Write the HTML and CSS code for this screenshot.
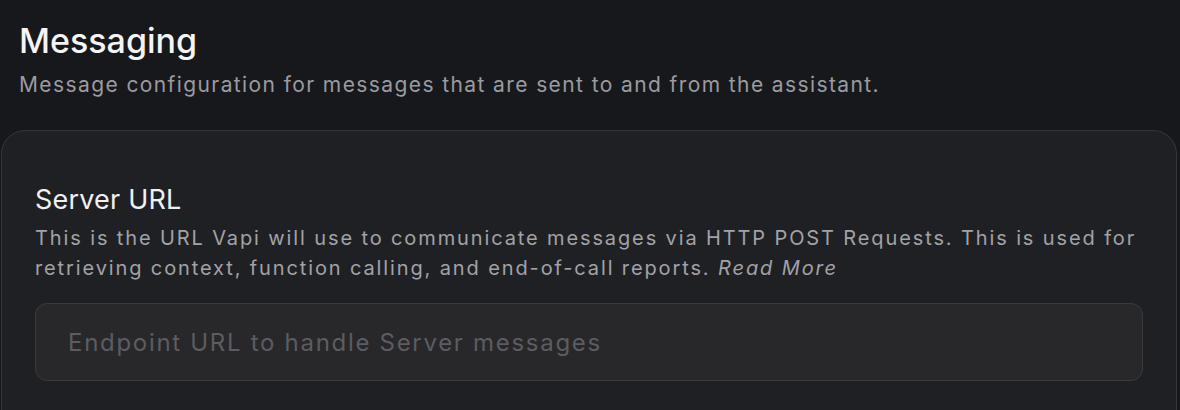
FILE: index.html
```html
<!DOCTYPE html>
<html>
<head>
<meta charset="utf-8">
<link rel="stylesheet" href="styles.css">
</head>
<body>
<div class="page">
  <header class="header">
    <h1 class="title">Messaging</h1>
    <p class="subtitle">Message configuration for messages that are sent to and from the assistant.</p>
  </header>
  <section class="card">
    <div class="field">
      <h2 class="label">Server URL</h2>
      <p class="desc">This is the URL Vapi will use to communicate messages via HTTP POST Requests. This is used for retrieving context, function calling, and end-of-call reports. <em class="more">Read More</em></p>
      <input class="input" type="text" placeholder="Endpoint URL to handle Server messages">
    </div>
  </section>
</div>
</body>
</html>
```

FILE: styles.css
```css
html, body {
  margin: 0;
  padding: 0;
  background: #17181b;
  font-family: Inter, "Noto Sans", sans-serif;
  overflow: hidden;
}
.page {
  padding: 0 3px 0 1px;
}
.header {
  padding: 21px 18px 0;
}
.title {
  margin: 0;
  font-size: 34px;
  font-weight: 500;
  line-height: 40px;
  color: #f4f4f5;
}
.subtitle {
  margin: 9px 0 0;
  font-size: 21px;
  line-height: 30px;
  letter-spacing: 1.4px;
  color: #9b9ba0;
}
.card {
  margin-top: 30px;
  background: #1f2024;
  border: 1px solid #35363a;
  border-radius: 24px;
  padding: 51px 33px 40px;
  height: 400px;
}
.label {
  margin: 0;
  font-size: 27px;
  font-weight: 400;
  line-height: 36px;
  letter-spacing: 0.2px;
  color: #f0f0f2;
}
.desc {
  margin: 5px 0 0;
  font-size: 20px;
  line-height: 30px;
  letter-spacing: 1.88px;
  color: #a2a2a7;
}
.more {
  font-style: italic;
}
.input {
  display: block;
  box-sizing: border-box;
  width: 100%;
  margin-top: 20px;
  height: 78px;
  padding: 0 32px;
  background: #28282b;
  border: 1px solid #3b3b3f;
  border-radius: 12px;
  font-family: Inter, "Noto Sans", sans-serif;
  font-size: 24px;
  letter-spacing: 1.7px;
  color: #e0e0e0;
  outline: none;
}
.input::placeholder {
  color: #5c5c62;
}
```
